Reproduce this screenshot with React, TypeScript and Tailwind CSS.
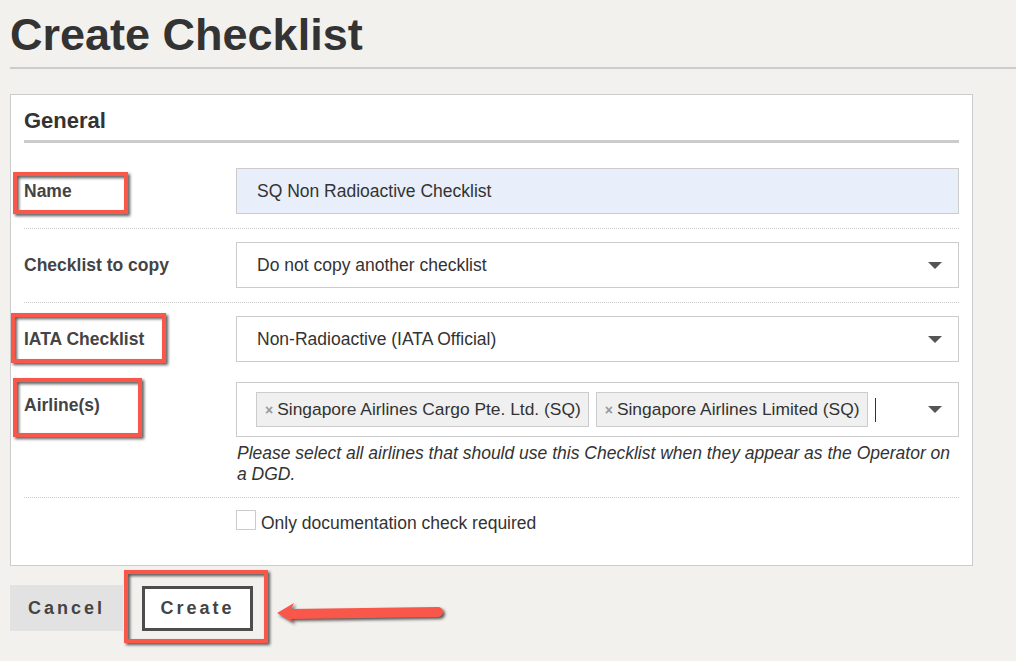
import React from 'react';

function Caret() {
  return (
    <div className="w-0 h-0 border-l-[7px] border-r-[7px] border-t-[7px] border-l-transparent border-r-transparent border-t-[#555]" />
  );
}

function Tag({ label }: { label: string }) {
  return (
    <div className="h-[35px] flex items-center gap-[4px] pl-[8px] pr-[7px] bg-[#f0f0f0] border border-[#ccc] text-[17.4px] text-[#333]">
      <span className="text-[14px] font-bold text-[#999] leading-none">×</span>
      <span>{label}</span>
    </div>
  );
}

function Row({
  label,
  children,
  className,
}: {
  label?: string;
  children: React.ReactNode;
  className?: string;
}) {
  return (
    <div className={'flex ' + (className ?? '')}>
      <div className="w-[212px] shrink-0 pt-[13px] text-[17.5px] leading-[20px] font-bold text-[#444]">{label}</div>
      <div className="flex-1 min-w-0">{children}</div>
    </div>
  );
}

function RedBox({ className }: { className: string }) {
  return (
    <div
      className={
        'absolute border-[4px] border-[#f9574a] drop-shadow-[2px_2px_1.5px_rgba(0,0,0,0.65)] pointer-events-none ' +
        className
      }
    />
  );
}

export default function App() {
  return (
    <div className="relative min-h-[661px] bg-[#f2f1ee] text-[#333] font-['Liberation_Sans',Arial,sans-serif] overflow-hidden">
      <div className="ml-[10px]">
        <h1 className="pt-[9px] mb-[6px] text-[45px] leading-[52px] font-bold text-[#333]">Create Checklist</h1>
        <div className="h-[2px] bg-[#ccc]" />
      </div>

      <div className="ml-[10px] mt-[25px] w-[963px] bg-white border border-[#ccc] px-[13px] pb-[32px]">
        <h2 className="pt-[13px] pb-[6px] mb-[11px] text-[22px] leading-[26px] font-bold text-[#333] border-b-[3px] border-[#ccc]">
          General
        </h2>

        <Row label="Name" className="pt-[14px] pb-[14px] border-b border-dotted border-[#ccc]">
          <div className="h-[46px] flex items-center px-[20px] bg-[#e8effa] border border-[#ccc] text-[17.5px] text-[#333]">
            SQ Non Radioactive Checklist
          </div>
        </Row>

        <Row label="Checklist to copy" className="pt-[13px] pb-[14px] border-b border-dotted border-[#ccc]">
          <div className="h-[46px] flex items-center justify-between pl-[20px] pr-[16px] bg-white border border-[#ccc] text-[17.5px] text-[#333]">
            <span>Do not copy another checklist</span>
            <Caret />
          </div>
        </Row>

        <Row label="IATA Checklist" className="pt-[13px] pb-[20px]">
          <div className="h-[46px] flex items-center justify-between pl-[20px] pr-[16px] bg-white border border-[#ccc] text-[17.5px] text-[#333]">
            <span>Non-Radioactive (IATA Official)</span>
            <Caret />
          </div>
        </Row>

        <Row label="Airline(s)" className="pb-[12px] border-b border-dotted border-[#ccc]">
          <div className="h-[55px] flex items-center gap-[7px] pl-[19px] pr-[16px] bg-white border border-[#ccc]">
            <Tag label="Singapore Airlines Cargo Pte. Ltd. (SQ)" />
            <Tag label="Singapore Airlines Limited (SQ)" />
            <div className="w-px h-[24px] bg-[#333]" />
            <div className="flex-1" />
            <Caret />
          </div>
          <p className="mt-[6px] pl-[1px] text-[17.5px] leading-[21px] italic text-[#333]">
            Please select all airlines that should use this Checklist when they appear as the Operator on a DGD.
          </p>
        </Row>

        <div className="flex pt-[12px]">
          <div className="w-[212px] shrink-0" />
          <label className="flex items-start gap-[5px]">
            <span className="w-[20px] h-[20px] border border-[#ccc] bg-white" />
            <span className="mt-[3px] text-[17.5px] leading-[20px] text-[#333]">Only documentation check required</span>
          </label>
        </div>
      </div>

      <div className="ml-[10px] mt-[19px] flex gap-[19px]">
        <button className="w-[113px] h-[46px] bg-[#e2e2e2] text-[18px] font-bold tracking-[3px] text-[#444]">
          Cancel
        </button>
        <button className="w-[111px] h-[45px] mt-[1px] bg-white border-[3px] border-[#4d4d4d] text-[18px] font-bold tracking-[3px] text-[#444]">
          Create
        </button>
      </div>

      <RedBox className="left-[13px] top-[172px] w-[115px] h-[42px]" />
      <RedBox className="left-[11px] top-[313px] w-[155px] h-[50px]" />
      <RedBox className="left-[13px] top-[378px] w-[129px] h-[59px]" />
      <RedBox className="left-[124px] top-[570px] w-[144px] h-[73px]" />

      <svg
        className="absolute left-[270px] top-[596px] drop-shadow-[2px_2px_1.5px_rgba(0,0,0,0.65)]"
        width="180"
        height="36"
        viewBox="0 0 180 36"
      >
        <path d="M7,17 L24,7 L21,13 L168,11 A5,5 0 0 1 168,21 L21,23 L24,27 Z" fill="#f9574a" />
      </svg>
    </div>
  );
}
